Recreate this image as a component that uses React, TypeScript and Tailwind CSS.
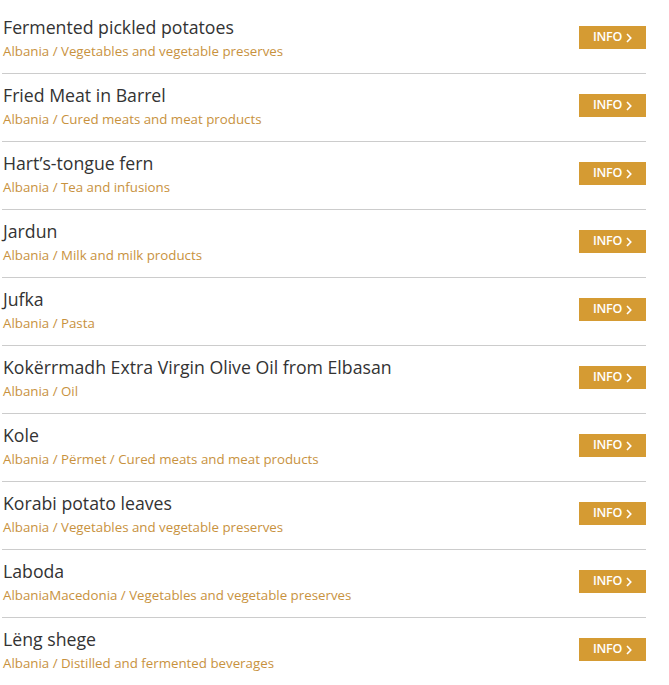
import React from "react";

const items = [
  { name: "Fermented pickled potatoes", meta: "Albania / Vegetables and vegetable preserves" },
  { name: "Fried Meat in Barrel", meta: "Albania / Cured meats and meat products" },
  { name: "Hart’s-tongue fern", meta: "Albania / Tea and infusions" },
  { name: "Jardun", meta: "Albania / Milk and milk products" },
  { name: "Jufka", meta: "Albania / Pasta" },
  { name: "Kokërrmadh Extra Virgin Olive Oil from Elbasan", meta: "Albania / Oil" },
  { name: "Kole", meta: "Albania / Përmet / Cured meats and meat products" },
  { name: "Korabi potato leaves", meta: "Albania / Vegetables and vegetable preserves" },
  { name: "Laboda", meta: "AlbaniaMacedonia / Vegetables and vegetable preserves" },
  { name: "Lëng shege", meta: "Albania / Distilled and fermented beverages" },
];

export default function App() {
  return (
    <div className="bg-white min-h-screen pt-[6px] pl-[2px] pr-[23px] font-['Open_Sans',sans-serif]">
      {items.map((item) => (
        <div
          key={item.name}
          className="flex items-start justify-between border-b border-[#cccccc] pt-[9px] h-[68px]"
        >
          <div className="pl-[1px]">
            <div className="text-[17.7px] leading-[24px] text-[#333333]">{item.name}</div>
            <div className="text-[13.3px] leading-[20px] text-[#c8923e] mt-[2px]">{item.meta}</div>
          </div>
          <a
            href="#"
            className="mt-[11px] flex items-center justify-center gap-[4px] w-[67px] h-[23px] bg-[#d59b33] text-white text-[12.5px] font-semibold tracking-tight"
          >
            INFO
            <svg width="6" height="10" viewBox="0 0 6 10" fill="none">
              <path d="M1 1l3.8 4L1 9" stroke="white" strokeWidth="1.6" />
            </svg>
          </a>
        </div>
      ))}
    </div>
  );
}
